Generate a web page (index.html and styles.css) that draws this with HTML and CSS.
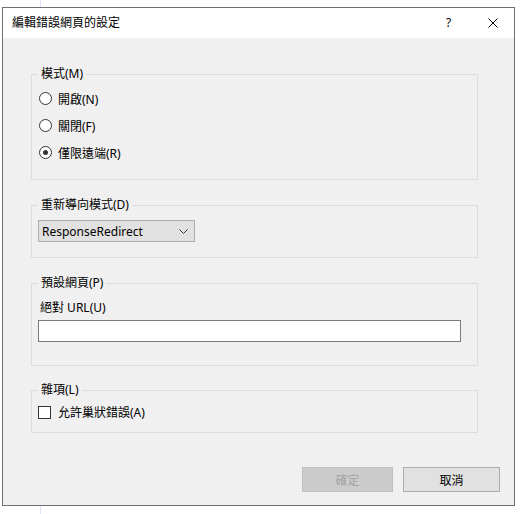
FILE: index.html
```html
<!DOCTYPE html>
<html lang="zh-Hant">
<head>
<meta charset="utf-8">
<title>編輯錯誤網頁的設定</title>
<link rel="stylesheet" href="styles.css">
</head>
<body>
<div class="page">
  <div class="window">
    <div class="titlebar">
      <span class="title">編輯錯誤網頁的設定</span>
      <span class="help">?</span>
      <span class="close"><svg width="10" height="10" viewBox="0 0 10 10"><path d="M0.5 0.5 L9.5 9.5 M9.5 0.5 L0.5 9.5" stroke="#000" stroke-width="1" fill="none"/></svg></span>
    </div>
    <div class="content">
      <fieldset class="group g-mode">
        <legend>模式(M)</legend>
        <div class="opt"><span class="radio"></span><span>開啟(N)</span></div>
        <div class="opt"><span class="radio"></span><span>關閉(F)</span></div>
        <div class="opt"><span class="radio checked"></span><span>僅限遠端(R)</span></div>
      </fieldset>
      <fieldset class="group g-redirect">
        <legend>重新導向模式(D)</legend>
        <div class="select"><span>ResponseRedirect</span><svg class="chev" width="9" height="5" viewBox="0 0 9 5"><path d="M0.5 0.5 L4.5 4.5 L8.5 0.5" stroke="#333" stroke-width="1" fill="none"/></svg></div>
      </fieldset>
      <fieldset class="group g-page">
        <legend>預設網頁(P)</legend>
        <div class="field-label">絕對 URL(U)</div>
        <div class="textbox"></div>
      </fieldset>
      <fieldset class="group g-misc">
        <legend>雜項(L)</legend>
        <div class="check-row"><span class="checkbox"></span><span>允許巢狀錯誤(A)</span></div>
      </fieldset>
      <div class="actions">
        <div class="btn btn-ok">確定</div>
        <div class="btn btn-cancel">取消</div>
      </div>
    </div>
  </div>
</div>
</body>
</html>
```

FILE: styles.css
```css
html, body {
  margin: 0;
}
body {
  background: #fff linear-gradient(#dce6f6, #dce6f6) no-repeat 40px 0 / 1px 100%;
  font-family: "Noto Sans", "Noto Sans CJK TC", sans-serif;
  font-size: 12px;
  color: #000;
  height: 514px;
}
.page {
  padding: 7px 0 0 2px;
}
.window {
  width: 513px;
  height: 499px;
  box-sizing: border-box;
  border: 1px solid #707070;
  background: #f0f0f0;
  display: flex;
  flex-direction: column;
}
.titlebar {
  height: 30px;
  flex: none;
  background: #fff;
  display: flex;
  align-items: center;
  padding-left: 9px;
}
.title {
  flex: 1;
  line-height: 16px;
}
.help {
  width: 21px;
  text-align: center;
  margin-right: 29px;
  line-height: 16px;
}
.close {
  width: 10px;
  height: 10px;
  margin-right: 16px;
  display: flex;
}
.content {
  flex: 1;
  display: flex;
  flex-direction: column;
  padding: 28px 0 0 28px;
}
.group {
  margin: 0;
  width: 447px;
  box-sizing: border-box;
  border: 1px solid #dcdcdc;
  padding: 0 6px;
  min-inline-size: auto;
}
.group legend {
  padding: 0 3px;
  height: 16px;
  line-height: 16px;
}
.g-mode {
  padding-top: 3px;
  padding-bottom: 13px;
}
.g-redirect {
  margin-top: 17px;
  padding-top: 7px;
  padding-bottom: 15px;
}
.g-page {
  margin-top: 17px;
  padding-top: 9px;
  padding-bottom: 23px;
}
.g-misc {
  margin-top: 16px;
  padding-top: 6px;
  padding-bottom: 12px;
}
.opt {
  height: 27px;
  display: flex;
  align-items: center;
}
.radio {
  width: 13px;
  height: 13px;
  box-sizing: border-box;
  border: 1px solid #333;
  border-radius: 50%;
  background: #fff;
  margin: 0 6px 0 1px;
  display: flex;
  align-items: center;
  justify-content: center;
}
.radio.checked::after {
  content: "";
  width: 5px;
  height: 5px;
  border-radius: 50%;
  background: #333;
}
.select {
  width: 157px;
  height: 22px;
  box-sizing: border-box;
  border: 1px solid #adadad;
  background: #e1e1e1;
  display: flex;
  align-items: center;
  justify-content: space-between;
  padding: 0 6px 0 3px;
}
.field-label {
  height: 16px;
  line-height: 16px;
  padding-left: 2px;
}
.textbox {
  margin-top: 4px;
  width: 423px;
  height: 22px;
  box-sizing: border-box;
  border: 1px solid #7a7a7a;
  background: #fff;
}
.check-row {
  height: 16px;
  display: flex;
  align-items: center;
}
.checkbox {
  width: 13px;
  height: 13px;
  box-sizing: border-box;
  border: 1px solid #333;
  background: #fff;
  margin-right: 7px;
}
.actions {
  margin-top: 34px;
  display: flex;
  justify-content: flex-end;
  gap: 10px;
  padding-right: 14px;
}
.btn {
  height: 25px;
  box-sizing: border-box;
  display: flex;
  align-items: center;
  justify-content: center;
  border: 1px solid #adadad;
  background: #e1e1e1;
}
.btn-ok {
  width: 91px;
  background: #cccccc;
  border-color: #bfbfbf;
  color: #a3a3a3;
}
.btn-cancel {
  width: 97px;
}
```
